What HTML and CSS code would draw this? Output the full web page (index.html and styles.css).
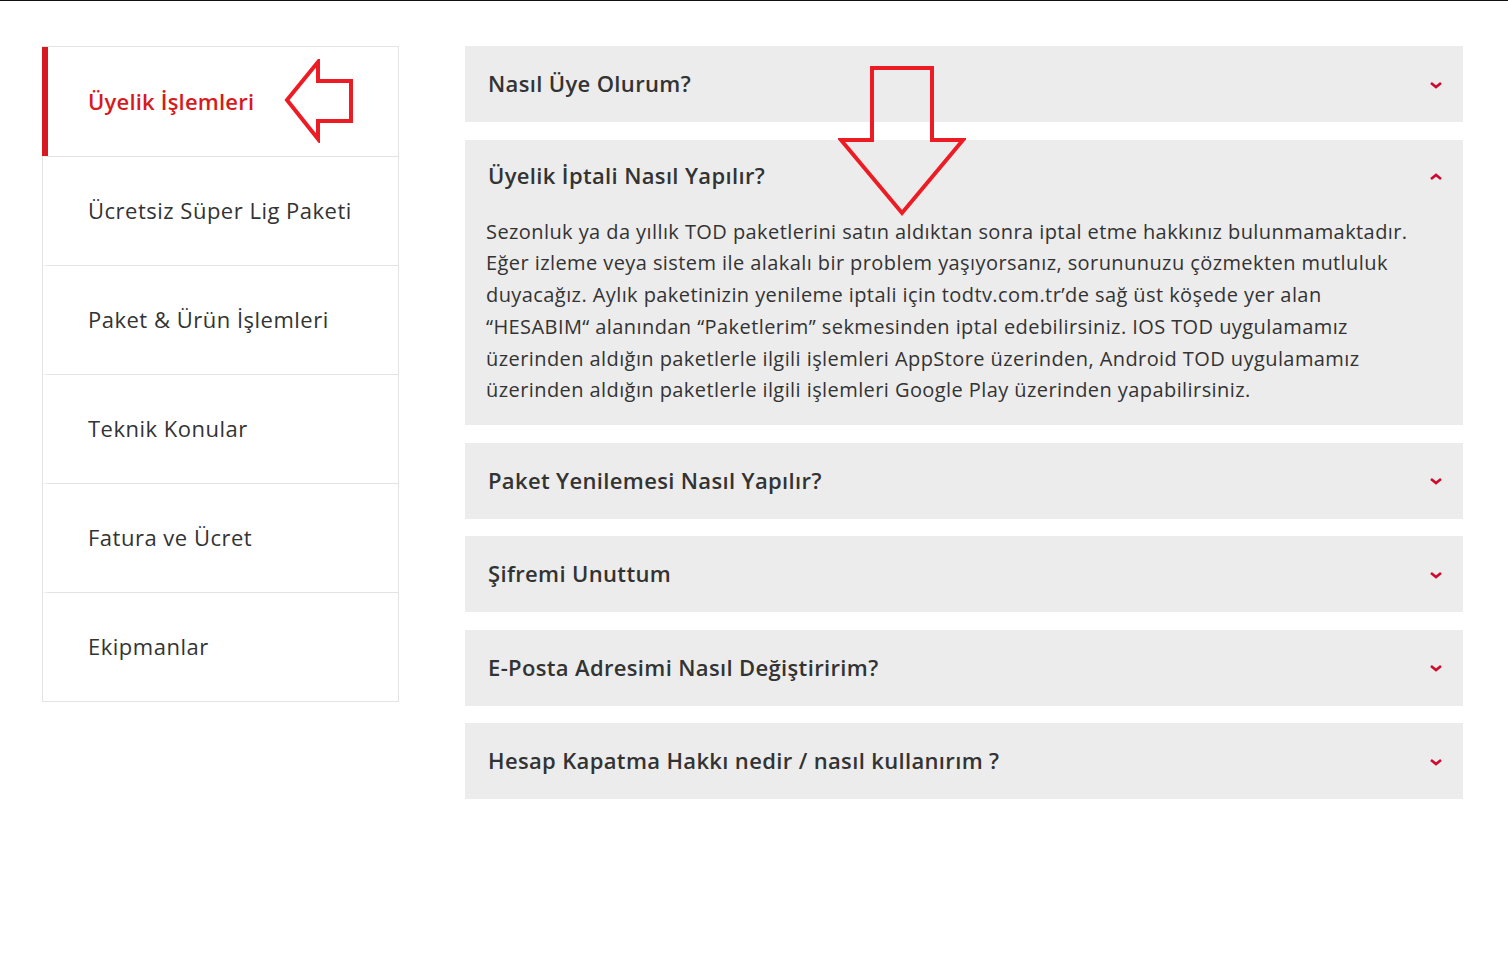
FILE: index.html
```html
<!DOCTYPE html>
<html lang="tr">
<head>
    <meta charset="UTF-8">
    <meta name="viewport" content="width=device-width, initial-scale=1.0">
    <title>Yardım</title>
    <link rel="stylesheet" href="styles.css">
</head>
<body>

    <div class="page">

        <!-- Kategori menüsü -->
        <nav class="side-menu">
            <a class="side-item active" href="#">Üyelik İşlemleri</a>
            <a class="side-item" href="#">Ücretsiz Süper Lig Paketi</a>
            <a class="side-item" href="#">Paket &amp; Ürün İşlemleri</a>
            <a class="side-item" href="#">Teknik Konular</a>
            <a class="side-item" href="#">Fatura ve Ücret</a>
            <a class="side-item" href="#">Ekipmanlar</a>
        </nav>

        <!-- Sorular -->
        <section class="faq">
            <div class="faq-item">
                <div class="faq-head">
                    <span>Nasıl Üye Olurum?</span>
                    <svg class="chev" width="14" height="8" viewBox="0 0 14 8"><path d="M2 2l5 4 5-4" fill="none" stroke="currentColor" stroke-width="2.6"/></svg>
                </div>
            </div>
            <div class="faq-item open">
                <div class="faq-head">
                    <span>Üyelik İptali Nasıl Yapılır?</span>
                    <svg class="chev" width="14" height="8" viewBox="0 0 14 8"><path d="M2 6l5-4 5 4" fill="none" stroke="currentColor" stroke-width="2.6"/></svg>
                </div>
                <p class="faq-body">Sezonluk ya da yıllık TOD paketlerini satın aldıktan sonra iptal etme hakkınız bulunmamaktadır. Eğer izleme veya sistem ile alakalı bir problem yaşıyorsanız, sorununuzu çözmekten mutluluk duyacağız. Aylık paketinizin yenileme iptali için todtv.com.tr’de sağ üst köşede yer alan “HESABIM“ alanından “Paketlerim” sekmesinden iptal edebilirsiniz. IOS TOD uygulamamız üzerinden aldığın paketlerle ilgili işlemleri AppStore üzerinden, Android TOD uygulamamız üzerinden aldığın paketlerle ilgili işlemleri Google Play üzerinden yapabilirsiniz.</p>
            </div>
            <div class="faq-item">
                <div class="faq-head">
                    <span>Paket Yenilemesi Nasıl Yapılır?</span>
                    <svg class="chev" width="14" height="8" viewBox="0 0 14 8"><path d="M2 2l5 4 5-4" fill="none" stroke="currentColor" stroke-width="2.6"/></svg>
                </div>
            </div>
            <div class="faq-item">
                <div class="faq-head">
                    <span>Şifremi Unuttum</span>
                    <svg class="chev" width="14" height="8" viewBox="0 0 14 8"><path d="M2 2l5 4 5-4" fill="none" stroke="currentColor" stroke-width="2.6"/></svg>
                </div>
            </div>
            <div class="faq-item">
                <div class="faq-head">
                    <span>E-Posta Adresimi Nasıl Değiştiririm?</span>
                    <svg class="chev" width="14" height="8" viewBox="0 0 14 8"><path d="M2 2l5 4 5-4" fill="none" stroke="currentColor" stroke-width="2.6"/></svg>
                </div>
            </div>
            <div class="faq-item">
                <div class="faq-head">
                    <span>Hesap Kapatma Hakkı nedir / nasıl kullanırım ?</span>
                    <svg class="chev" width="14" height="8" viewBox="0 0 14 8"><path d="M2 2l5 4 5-4" fill="none" stroke="currentColor" stroke-width="2.6"/></svg>
                </div>
            </div>
        </section>

    </div>

    <!-- İşaret okları -->
    <svg class="mark mark-left" width="70" height="84" viewBox="284 59 70 84">
        <polygon points="287,100 318,62 318,81 351,81 351,121 318,121 318,139" fill="none" stroke="#ed1c24" stroke-width="4" stroke-linejoin="miter"/>
    </svg>
    <svg class="mark mark-down" width="128" height="152" viewBox="838 65 128 152">
        <polygon points="872,68 932,68 932,140 963,140 902,213 841,140 872,140" fill="none" stroke="#ed1c24" stroke-width="4"/>
    </svg>

</body>
</html>
```

FILE: styles.css
```css
body {
    margin: 0;
    padding: 0;
    font-family: 'Open Sans', sans-serif;
    color: #333;
    background-color: #fff;
    border-top: 1px solid #111;
}
.page {
    display: flex;
    align-items: flex-start;
    gap: 66px;
    padding: 45px 45px 0 42px;
}
.side-menu {
    width: 355px;
    flex-shrink: 0;
    display: flex;
    flex-direction: column;
    border: 1px solid #e3e3e3;
}
.side-item {
    display: flex;
    align-items: center;
    height: 109px;
    padding: 0 0 2px 40px;
    box-sizing: border-box;
    font-size: 22px;
    letter-spacing: 0.5px;
    color: #333;
    text-decoration: none;
    border-left: 6px solid transparent;
    margin-left: -1px;
    border-top: 1px solid #e3e3e3;
}
.side-item:first-child {
    border-top: none;
}
.side-item.active {
    border-left-color: #d71920;
    color: #d71920;
    font-weight: 600;
    letter-spacing: 0.2px;
}
.faq {
    flex: 1;
    display: flex;
    flex-direction: column;
    gap: 17.5px;
}
.faq-item {
    background-color: #ececec;
}
.faq-head {
    display: flex;
    justify-content: space-between;
    align-items: center;
    height: 76px;
    padding: 0 20px 2px 23px;
    box-sizing: border-box;
    font-size: 22px;
    font-weight: 600;
    letter-spacing: 0.35px;
    color: #333;
}
.faq-item.open .faq-head {
    height: 74px;
    padding-bottom: 3px;
}
.chev {
    color: #cf0a2c;
    margin-top: 3px;
}
.faq-body {
    margin: 0;
    padding: 2px 43px 19px 21px;
    font-size: 20px;
    letter-spacing: 0.42px;
    line-height: 31.8px;
    color: #333;
}
.mark {
    position: absolute;
}
.mark-left {
    left: 284px;
    top: 59px;
}
.mark-down {
    left: 838px;
    top: 65px;
}
```
